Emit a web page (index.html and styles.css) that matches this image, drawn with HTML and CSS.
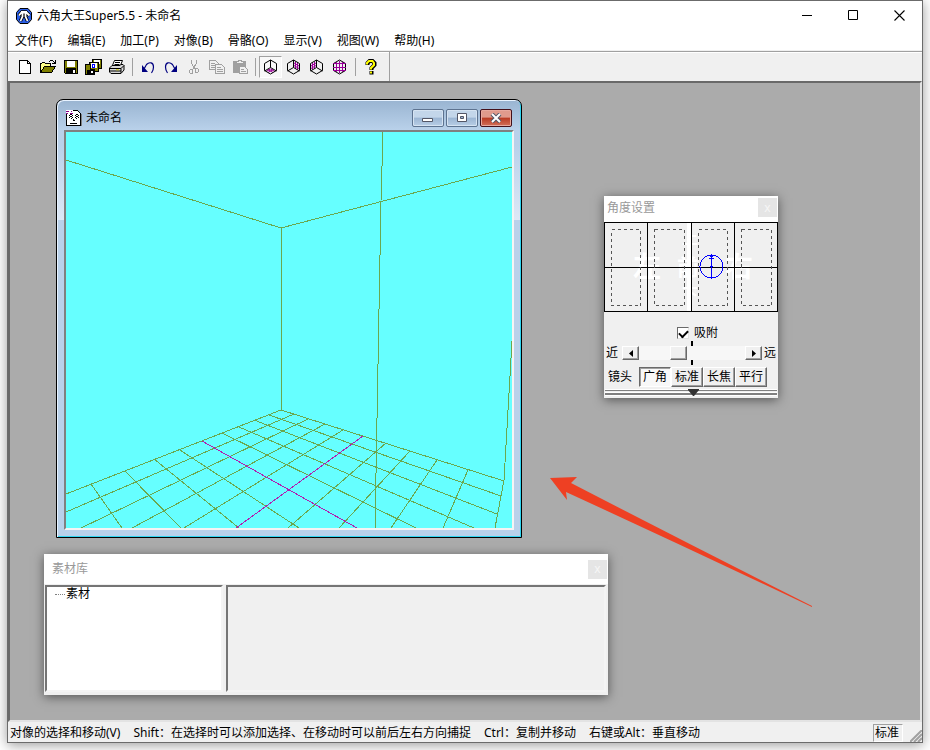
FILE: index.html
```
<!DOCTYPE html>
<html lang="zh-CN">
<head>
<meta charset="UTF-8">
<meta name="viewport" content="width=device-width, initial-scale=1.0">
<title>六角大王Super5.5 - 未命名</title>
<link rel="stylesheet" href="styles.css">
</head>
<body>
  <div class="app">
    <header class="titlebar">
      <svg class="app-icon" width="16" height="16" viewBox="0 0 16 16">
        <path d="M4 .5h8l3.500 4v7l-3.500 4h-8l-3.500-4v-7z" fill="#2b5fe8" stroke="#000"/>
        <path d="M3 7.500l2.500-3h5l3 3M6.500 5v3.500l-2 4.500M9.500 5v3.500l2 4.500M5 4h6" fill="none" stroke="#000" stroke-width="3.400"/>
        <path d="M3 7.500l2.500-3h5l3 3M6.500 5v3.500l-2 4.500M9.500 5v3.500l2 4.500M5 4h6" fill="none" stroke="#fff" stroke-width="1.800"/>
      </svg>
      <h1>六角大王Super5.5 - 未命名</h1>
      <div class="window-buttons">
        <button type="button" aria-label="最小化"><svg width="11" height="11"><path d="M0 5.500h10" stroke="#000"/></svg></button>
        <button type="button" aria-label="最大化"><svg width="11" height="11"><path d="M.5.5h9v9h-9z" fill="none" stroke="#000"/></svg></button>
        <button type="button" aria-label="关闭"><svg width="11" height="11"><path d="M.5.5l10 10M10.500.5l-10 10" stroke="#000" stroke-width="1.100"/></svg></button>
      </div>
    </header>
    <nav class="menu">
      <button type="button">文件(F)</button>
      <button type="button">编辑(E)</button>
      <button type="button">加工(P)</button>
      <button type="button">对像(B)</button>
      <button type="button">骨骼(O)</button>
      <button type="button">显示(V)</button>
      <button type="button">视图(W)</button>
      <button type="button">帮助(H)</button>
    </nav>
    <div class="toolbar">
      <div class="tools">
        <button type="button" aria-label="新建"><svg width="16" height="16" shape-rendering="crispEdges"><path d="M2.500 1.500h8l3 3v10h-11z" fill="#fff" stroke="#000"/><path d="M10.500 1.500v3h3" fill="none" stroke="#000"/></svg></button>
        <button type="button" aria-label="打开"><svg width="16" height="16" shape-rendering="crispEdges"><path d="M.5 13.500v-9h1l1-1h2l1 1h5v3" fill="#ff8" stroke="#000"/><path d="M.5 13.500l4-6h11l-4 6z" fill="#808000" stroke="#000"/><path d="M9 2.500h1M10 1.500h3M13 2.500h1M14 3.500h1M12 4.500h3M15 1v4" stroke="#000"/></svg></button>
        <button type="button" aria-label="保存"><svg width="16" height="16" shape-rendering="crispEdges"><path d="M1.500 1.500h13v13h-12l-1-1z" fill="#808000" stroke="#000"/><path d="M4 2h8v6H4z" fill="#fff"/><path d="M3 9h10v6H3z" fill="#000"/><path d="M10 11h2v3h-2z" fill="#fff"/></svg></button>
        <button type="button" aria-label="全部保存"><svg width="17" height="16" shape-rendering="crispEdges"><path d="M7.500.5h9v9h-9z" fill="#808000" stroke="#000"/><path d="M9 1h6v4H9z" fill="#fff"/><path d="M4.500 3.500h9v9h-9z" fill="#808000" stroke="#000"/><path d="M6 4h6v5H6z" fill="#fff"/><path d="M7.500 5v3h2V5z" fill="#fff" stroke="#00f"/><path d="M.5 5.500h5v5h4v5h-9z" fill="#808000" stroke="#000"/><path d="M2 11h7v4H2z" fill="#000"/><path d="M6 12h2v2H6z" fill="#fff"/></svg></button>
        <button type="button" aria-label="打印"><svg width="16" height="16"><path d="M5.500 1.500h8l-2.500 6H3z" fill="#fff" stroke="#000"/><path d="M6 3.500h5M5.500 5.500h5" stroke="#000"/><path d="M.5 9l2.500-2.500h8l1-1h2l1 1V11l-3 3.500H2L.5 13z" fill="#d8d8d8" stroke="#000"/><path d="M.5 9.500h11.500v4.500M12 9.500l3-3M1 12h11" fill="none" stroke="#000"/><path d="M7 10.800h3" stroke="#cc0"/></svg></button>
        <span class="sep"></span>
        <button type="button" aria-label="撤销"><svg width="16" height="16"><path d="M2 6v7h6z" fill="#000080"/><path d="M4 10l2.500-4.500c3-3 7-2 7 2.500 0 2-.5 4-2 6" fill="none" stroke="#000080" stroke-width="1.200"/></svg></button>
        <button type="button" aria-label="重做"><svg width="16" height="16"><path d="M14 6v7H8z" fill="#000080"/><path d="M12 10L9.500 5.500c-3-3-7-2-7 2.500 0 2 .5 4 2 6" fill="none" stroke="#000080" stroke-width="1.200"/></svg></button>
        <button type="button" aria-label="剪切" disabled><svg width="16" height="16" shape-rendering="crispEdges" fill="none" stroke="#a0a0a0"><path d="M5.500 1v3l4 7M10.500 1v3l-4 7"/><path d="M4.500 10.500h2v4h-2l-1-1v-2zM9.500 9.500h2l1 1v2l-1 1h-2z"/></svg></button>
        <button type="button" aria-label="复制" disabled><svg width="16" height="16" shape-rendering="crispEdges" fill="#f0f0f0" stroke="#a0a0a0"><path d="M.5 1.500h6l3 3v6h-9zM2 4.500h4M2 6.500h5M2 8.500h5"/><path d="M6.500 5.500h6l3 3v6h-9zM8 8.500h4M8 10.500h6M8 12.500h6"/></svg></button>
        <button type="button" aria-label="粘贴" disabled><svg width="16" height="16" shape-rendering="crispEdges"><path d="M1 2h13v12H1z" fill="#a0a0a0"/><path d="M4 4h7V2H9V1H6v1H4z" fill="#f0f0f0" stroke="#a0a0a0"/><path d="M7.500 7.500h5l3 3v4h-8z" fill="#f0f0f0" stroke="#a0a0a0"/><path d="M9 10.500h3M9 12.500h5" stroke="#a0a0a0"/></svg></button>
        <span class="sep"></span>
        <button type="button" class="pressed" aria-label="底面"><svg width="15" height="16" fill="none" stroke="#000"><path d="M3 12.500l4.500-2.500 4.500 2.500M5 13.500l5-3M5 10.500l5 3" stroke="#909"/><path d="M7.500 1l6 3.500v7l-6 3.500-6-3.500v-7zM7.500 1v7.500l-6 3.500M7.500 8.500l6 3.500"/></svg></button>
        <button type="button" aria-label="右面"><svg width="15" height="16" fill="none" stroke="#000"><path d="M9.500 2.500v7M11.500 3.500v7M8 4l5 3M8 6.500l5 3" stroke="#909"/><path d="M7.500 1l6 3.500v7l-6 3.500-6-3.500v-7zM7.500 1v7.500l-6 3.500M7.500 8.500l6 3.500"/></svg></button>
        <button type="button" aria-label="左面"><svg width="15" height="16" fill="none" stroke="#000"><path d="M5.500 2.500v7M3.500 3.500v7M7 4L2 7M7 6.500l-5 3" stroke="#909"/><path d="M7.500 1l6 3.500v7l-6 3.500-6-3.500v-7zM7.500 1v7.500l-6 3.500M7.500 8.500l6 3.500"/></svg></button>
        <button type="button" aria-label="前面"><svg width="15" height="16" fill="none" stroke="#000"><path d="M7.500 1l6 3.500v7l-6 3.500-6-3.500v-7z"/><path d="M4.500 3v10M10.500 3v10M7.500 2v12M1 4.500h13M1 8.500h13M1 11.500h13" stroke="#909"/></svg></button>
        <span class="sep"></span>
        <button type="button" aria-label="帮助"><svg width="16" height="16" fill="none"><path d="M4.500 6V4l2-2h3l2 2v2L8.500 9v2M8.500 12v3.500" stroke="#000" stroke-width="4"/><path d="M4 5.500V4l2-2h3.500L11 4v2L8 9v1.500M8 12.500v2" stroke="#ff0" stroke-width="2"/></svg></button>
      </div>
    </div>

    <main class="desktop">
      <section class="child">
        <div class="child-title">
          <svg width="16" height="16" shape-rendering="crispEdges">
            <path d="M.5 .5h11l3 3v12H.5z" fill="#fff" stroke="#000"/>
            <path d="M15.500 4v12" stroke="#808080"/>
            <path d="M0 .5h7M0 2.500h2M4 2.500h2M0 3.500h1" stroke="#fff"/>
            <path d="M0 1.500h3M0 3.500h2M5 1.500h1M4 3.500h3" stroke="#808"/>
            <path d="M3 5.500h1M4 4.500h2M6 5.500h1M9 5.500h1M10 4.500h2M12 5.500h1M3 7.500h1M4 6.500h2M6 7.500h1M9 7.500h1M10 6.500h2M12 7.500h1M5 8.500h1M10 8.500h1M7 9.500h1M7 10.500h2M4 13.500h7" stroke="#000"/>
          </svg>
          <h2>未命名</h2>
          <button type="button" aria-label="最小化"><svg width="12" height="10"><path d="M.5 5.500h10v3H.5z" fill="#fff" stroke="#535666"/></svg></button>
          <button type="button" aria-label="最大化"><svg width="12" height="10"><path d="M1.500.5h9v8h-9z" fill="#fff" stroke="#535666"/><path d="M4.500 3.500h3v2h-3z" fill="#9bb5d3" stroke="#535666"/></svg></button>
          <button type="button" class="close" aria-label="关闭"><svg width="12" height="10"><path d="M2 1l8 8M10 1L2 9" stroke="#535666" stroke-width="4"/><path d="M2 1l8 8M10 1L2 9" stroke="#fff" stroke-width="2"/></svg></button>
        </div>
        <!-- room: walls first, then the 10 x 10 floor grid, axes last -->
        <svg class="view" viewBox="66 132 446 396" fill="none" shape-rendering="crispEdges">
          <g stroke="#6aa84f">
            <path d="M66 160L281 228L512 167M281 228V410M383 132L381 201L375 528M512 341L504 480L495 528"/>
            <path d="M281 410L504 481M269 415L501 496M254 420L497 514M239 427L474 528M222 433L416 528"/>
            <path d="M180 450L299 528M154 459L239 528M125 471L181 528M91 484L122 528"/>
            <path d="M281 410L66 494M294 414L66 512M308 419L81 528M325 424L132 528M343 430L184 528"/>
            <path d="M386 443L288 528M410 451L339 528M437 460L391 528M468 470L443 528"/>
          </g>
          <path d="M202 441L357 528M363 436L236 528" stroke="#b020b0"/>
        </svg>
      </section>

      <section class="palette angle">
        <div class="palette-title">
          <h2>角度设置</h2>
          <button type="button" aria-label="关闭">x</button>
        </div>
        <svg class="angle-map" viewBox="0 0 174 90" fill="none">
          <path d="M83 0h4v90h-4z" fill="#fff"/>
          <g class="directions">
            <text class="small" x="86" y="22">上</text>
            <text x="43" y="55">左</text>
            <text class="middle" x="84" y="53">前</text>
            <text x="135" y="55">右</text>
            <text class="small" x="86" y="78">下</text>
          </g>
          <g shape-rendering="crispEdges">
            <path d="M.5.5h173v89H.5zM43.500 0v90M87.500 0v90M130.500 0v90M0 45.500h174" stroke="#000"/>
            <path d="M7.500 7.500h29v76h-29zM50.500 7.500h30v76h-30zM94.500 7.500h29v76h-29zM137.500 7.500h30v76h-30z" stroke="#555" stroke-dasharray="3 3"/>
            <circle cx="107.500" cy="44.500" r="11.500" stroke="#00f"/>
            <path d="M107.500 32v25M105 36.500h5M106 34.500h3M106 44.500h3" stroke="#00f"/>
          </g>
        </svg>
        <label class="snap"><input type="checkbox" checked>吸附</label>
        <div class="zoom-row">
          <span>近</span>
          <div class="scroller">
            <button type="button" aria-label="拉近"><svg width="4" height="7"><path d="M4 0v7L0 3.500z"/></svg></button>
            <input type="range" min="0" max="100" value="35" aria-label="距离">
            <button type="button" aria-label="拉远"><svg width="4" height="7"><path d="M0 0v7l4-3.500z"/></svg></button>
          </div>
          <span>远</span>
        </div>
        <div class="lens-row">
          <span>镜头</span>
          <button type="button" class="on">广角</button>
          <button type="button">标准</button>
          <button type="button">长焦</button>
          <button type="button">平行</button>
        </div>
        <div class="fold"><svg width="11" height="7"><path d="M0 0h11v1L6 7H5L0 1z" fill="#333"/></svg></div>
      </section>

      <section class="palette library">
        <div class="palette-title">
          <h2>素材库</h2>
          <button type="button" aria-label="关闭">x</button>
        </div>
        <div class="library-body">
          <ul class="tree">
            <li>素材</li>
          </ul>
          <div class="preview"></div>
        </div>
      </section>

      <svg class="arrow" width="264" height="132" viewBox="549 476 264 132">
        <path d="M550 478l27-1-6 6q120 62 241 123v1q-122-58-246-115l1 8z" fill="#ee4023"/>
      </svg>
    </main>

    <footer class="status">
      <span>对像的选择和移动(V)</span>
      <span>Shift：在选择时可以添加选择、在移动时可以前后左右方向捕捉</span>
      <span>Ctrl：复制并移动</span>
      <span>右键或Alt：垂直移动</span>
      <span class="mode">标准</span>
      <svg class="grip" width="12" height="12" stroke="#a0a0a0" stroke-width="2"><path d="M0 12L12 0M4 12l8-8M8 12l4-4"/></svg>
    </footer>
  </div>
</body>
</html>
```
FILE: styles.css
```
* {
  box-sizing: border-box;
}

body {
  margin: 0;
  padding: 0 7px 7px;
  background: #fff;
  color: #000;
  font: 12px/16px "Noto Sans", "Noto Sans CJK SC", sans-serif;
}

h1, h2 {
  margin: 0;
  font-size: 12px;
  font-weight: normal;
}

button {
  margin: 0;
  padding: 0;
  border: 0;
  background: none;
  color: inherit;
  font: inherit;
}

svg {
  display: block;
}

.app {
  display: flex;
  flex-direction: column;
  min-height: calc(100vh - 7px);
  border: 1px solid #6b6b6b;
  background: #f0f0f0;
  box-shadow: 0 2px 12px rgba(0, 0, 0, 0.4);
}

/* title and menu */

.titlebar {
  display: flex;
  align-items: center;
  height: 29px;
  padding-left: 8px;
  background: #fff;
}

.titlebar h1 {
  flex: 1;
  margin-left: 5px;
}

.window-buttons {
  display: flex;
}

.window-buttons button {
  display: flex;
  align-items: center;
  justify-content: center;
  width: 46px;
  height: 29px;
}

.menu {
  display: flex;
  height: 20px;
  background: #fff;
}

.menu button {
  padding: 2px 8px 0 7px;
}

/* toolbar */

.toolbar {
  display: flex;
  height: 30px;
  margin-top: 1px;
  border-top: 1px solid #a0a0a0;
  box-shadow: inset 0 1px #fff;
}

.tools {
  display: flex;
  align-items: center;
  padding: 0 7px 0 5px;
  border-right: 1px solid #a0a0a0;
}

.tools button {
  display: flex;
  align-items: center;
  justify-content: center;
  width: 23px;
  height: 22px;
}

.tools .pressed {
  border: 1px solid;
  border-color: #a0a0a0 #fff #fff #a0a0a0;
  background: #f8f8f8;
}

.sep {
  width: 8px;
  height: 18px;
  background: linear-gradient(#a0a0a0, #a0a0a0) 4px 0 / 1px 100% no-repeat;
}

/* desktop with its windows */

.desktop {
  position: relative;
  flex: 1;
  min-height: 620px;
  overflow: hidden;
  border: 2px solid;
  border-color: #696969 #e3e3e3 #e3e3e3 #696969;
  background: #ababab;
}

.child {
  position: absolute;
  left: 46px;
  top: 16px;
  width: 466px;
  padding: 1px 7px 7px;
  border: 1px solid #000;
  border-radius: 7px 7px 0 0;
  background: linear-gradient(#99b4d1, #b9d1ea 30px, #b9d1ea 45px, #dde8f6 120px, #b9d1ea 120px);
  box-shadow: inset 1px 1px #e8f3ff, inset -1px -1px #2fd5f0;
}

.child-title {
  display: flex;
  align-items: center;
  gap: 2px;
  height: 29px;
  padding: 5px 2px 0;
}

.child-title h2 {
  flex: 1;
  margin-left: 2px;
}

.child-title button {
  display: flex;
  align-items: center;
  justify-content: center;
  width: 32px;
  height: 18px;
  border: 1px solid #5d7390;
  border-radius: 2px;
  background: linear-gradient(#c3d6ea 45%, #9bb5d3 50%, #b8cee6);
  box-shadow: inset 0 0 0 1px #d5e3f2;
}

.child-title .close {
  border-color: #43101a;
  background: linear-gradient(#e09a8c 45%, #b93a22 50%, #d2705a);
  box-shadow: inset 0 0 0 1px #e8a99e;
}

.view {
  width: 100%;
  border: 2px solid;
  border-color: #808080 #f4f4f4 #f4f4f4 #808080;
  background: #66ffff;
}

.palette {
  position: absolute;
  background: #f0f0f0;
  box-shadow: 0 2px 10px rgba(0, 0, 0, 0.5);
}

.palette-title {
  display: flex;
  align-items: center;
  background: #fff;
  color: #999;
}

.palette-title h2 {
  flex: 1;
}

.palette-title button {
  width: 19px;
  height: 19px;
  margin-right: 1px;
  background: #e5e5e5;
  color: #f6f6f6;
}

/* angle palette */

.angle {
  left: 594px;
  top: 113px;
  width: 174px;
}

.angle .palette-title {
  height: 26px;
  padding: 0 0 3px 3px;
}

.angle-map {
  width: 100%;
}

.directions {
  fill: #fff;
  font-size: 28px;
  font-weight: bold;
  text-anchor: middle;
}

.directions .middle {
  font-size: 22px;
}

.directions .small {
  font-size: 16px;
}

.snap {
  display: flex;
  align-items: center;
  justify-content: center;
  gap: 5px;
  height: 16px;
  margin: 13px 0 0 13px;
}

.snap input {
  appearance: none;
  width: 12px;
  height: 12px;
  margin: 0;
  border: 1px solid;
  border-color: #696969 #e3e3e3 #e3e3e3 #696969;
  background: #fff;
}

.snap input:checked::before {
  content: "";
  display: block;
  width: 7px;
  height: 4px;
  margin: 2px 1px;
  border: solid #000;
  border-width: 0 0 2px 2px;
  transform: rotate(-45deg);
}

.zoom-row {
  display: flex;
  align-items: center;
  justify-content: space-between;
  height: 24px;
  padding: 0 2px;
  background:
    linear-gradient(#000, #000) 87px 0 / 2px 5px no-repeat,
    linear-gradient(#000, #000) 87px 100% / 2px 5px no-repeat;
}

.scroller {
  display: flex;
  width: 140px;
  height: 14px;
  margin-left: 2px;
}

.scroller button {
  display: flex;
  align-items: center;
  justify-content: center;
  width: 17px;
}

.scroller input {
  appearance: none;
  flex: 1;
  min-width: 0;
  margin: 0;
  background: #f7f7f7;
}

.scroller button,
.scroller input::-webkit-slider-thumb,
.lens-row button {
  border: 1px solid;
  border-color: #fff #696969 #696969 #fff;
  background: #f0f0f0;
  box-shadow: inset -1px -1px #a0a0a0;
}

.scroller input::-webkit-slider-thumb {
  appearance: none;
  width: 17px;
  height: 14px;
}

.lens-row {
  display: flex;
  align-items: center;
  height: 20px;
  margin-top: 2px;
  padding-left: 4px;
}

.lens-row span {
  margin-right: 7px;
}

.lens-row button {
  width: 32px;
  height: 20px;
}

.lens-row .on {
  border-color: #696969 #fff #fff #696969;
  background: #f8f8f8;
  box-shadow: inset 1px 1px #a0a0a0;
}

.fold {
  display: flex;
  justify-content: center;
  height: 7px;
  margin: 2px 1px;
  padding-left: 5px;
  background: linear-gradient(#fff 1px, #808080 1px, #808080 2px, #f0f0f0 2px, #f0f0f0 3px, #fff 3px, #fff 4px, #808080 4px, #808080 6px, #fff 6px);
}

/* material library */

.library {
  left: 34px;
  top: 471px;
  width: 564px;
}

.library .palette-title {
  height: 30px;
  padding-left: 8px;
}

.library-body {
  display: flex;
  gap: 3px;
  height: 111px;
  padding: 1px 2px 3px 1px;
}

.tree,
.preview {
  border: 2px solid;
  border-color: #757575 #f4f4f4 #f4f4f4 #757575;
}

.tree {
  width: 178px;
  margin: 0;
  padding: 0 8px;
  background: #fff;
  list-style: none;
}

.tree li {
  display: flex;
  align-items: center;
  gap: 1px;
  height: 14px;
}

.tree li::before {
  content: "";
  width: 10px;
  border-top: 1px dotted #808080;
}

.preview {
  flex: 1;
}

.arrow {
  position: absolute;
  left: 539px;
  top: 393px;
}

/* status bar */

.status {
  display: flex;
  align-items: center;
  gap: 13px;
  height: 20px;
  padding: 2px 0 0 2px;
  white-space: nowrap;
}

.mode {
  margin-left: auto;
  padding: 0 3px 0 1px;
  border: 1px solid;
  border-color: #a0a0a0 #fff #fff #a0a0a0;
}

.grip {
  align-self: flex-end;
  margin-left: -6px;
}
```
